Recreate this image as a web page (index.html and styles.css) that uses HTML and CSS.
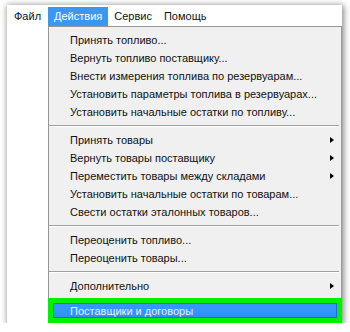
FILE: index.html
```html
<!DOCTYPE html>
<html lang="ru">
<head>
  <meta charset="UTF-8">
  <title>Меню Действия</title>
  <link rel="stylesheet" href="styles.css">
</head>
<body>
<div class="window">
  <div class="menubar">
    <span class="mb-item">Файл</span>
    <span class="mb-item active">Действия</span>
    <span class="mb-item">Сервис</span>
    <span class="mb-item">Помощь</span>
  </div>
  <div class="work">
    <div class="left-col"></div>
    <div class="dropdown">
      <div class="item">Принять топливо...</div>
      <div class="item">Вернуть топливо поставщику...</div>
      <div class="item">Внести измерения топлива по резервуарам...</div>
      <div class="item">Установить параметры топлива в резервуарах...</div>
      <div class="item">Установить начальные остатки по топливу...</div>
      <div class="sep"></div>
      <div class="item sub">Принять товары<span class="arrow"></span></div>
      <div class="item sub">Вернуть товары поставщику<span class="arrow"></span></div>
      <div class="item sub">Переместить товары между складами<span class="arrow"></span></div>
      <div class="item">Установить начальные остатки по товарам...</div>
      <div class="item">Свести остатки эталонных товаров...</div>
      <div class="sep"></div>
      <div class="item">Переоценить топливо...</div>
      <div class="item">Переоценить товары...</div>
      <div class="sep"></div>
      <div class="item sub">Дополнительно<span class="arrow"></span></div>
      <div class="item hilite">Поставщики и договоры</div>
    </div>
  </div>
</div>
</body>
</html>
```

FILE: styles.css
```css
body {
  margin: 0;
  background: #fff;
  font-family: "Liberation Sans", Arial, sans-serif;
  font-size: 11px;
  color: #111;
}
.window {
  margin: 5px 0 0 7px;
  width: 335px;
  height: 318px;
  background: #fff;
  box-shadow: 1px 1px 6px 1px rgba(0, 0, 0, 0.45);
  display: flex;
  flex-direction: column;
}
.menubar {
  display: flex;
  height: 21px;
  padding-top: 2px;
  box-sizing: border-box;
}
.mb-item {
  padding: 0 6px;
  line-height: 19px;
}
.mb-item:first-child { padding-left: 7px; }
.mb-item.active {
  margin-left: 1px;
  background: #3c97f0;
  color: #fff;
}
.work {
  flex: 1;
  display: flex;
}
.left-col { width: 41px; }
.dropdown {
  flex: 1;
  background: #f0f0f0;
  border: 1px solid #979797;
  padding-top: 4px;
  display: flex;
  flex-direction: column;
}
.item {
  height: 18px;
  line-height: 18px;
  padding-left: 21px;
  display: flex;
  align-items: center;
  white-space: nowrap;
}
.arrow {
  margin-left: auto;
  margin-right: 7px;
  width: 0;
  height: 0;
  border-left: 4px solid #000;
  border-top: 3.5px solid transparent;
  border-bottom: 3.5px solid transparent;
}
.sep {
  height: 10px;
  box-sizing: border-box;
  padding-top: 4px;
  margin: 0 2px 0 0;
}
.sep::before {
  content: "";
  display: block;
  border-top: 1px solid #a0a0a0;
  border-bottom: 1px solid #fff;
}
.hilite {
  margin: 3px -1px -1px -1px;
  height: 25px;
  box-sizing: border-box;
  border: 5px solid #00f000;
  padding-left: 17px;
  background: linear-gradient(#3a94f0, #3399ff 40%, #2f8ef0);
  box-shadow: inset 1px 1px 0 #1f6fc0, inset -1px -1px 0 #1f6fc0;
  color: #e6f2ff;
}
```
